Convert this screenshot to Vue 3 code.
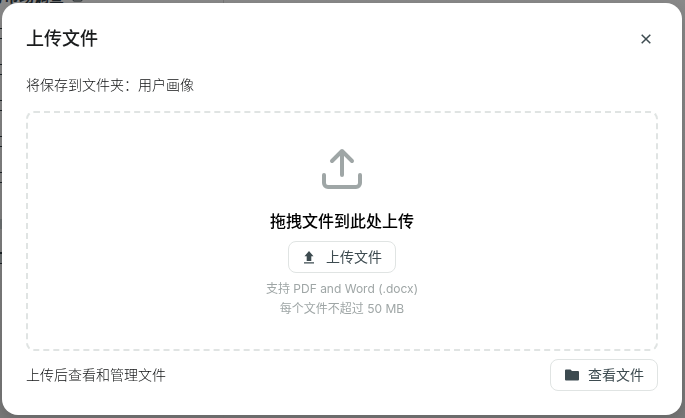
<template>
  <div class="page">
    <aside class="sidebar">
      <h2 class="sidebar-title">
        <span>写市场调查</span>
        <svg width="12" height="12" viewBox="0 0 12 12"><rect x="1" y="1" width="9" height="9" rx="1" fill="none" stroke="currentColor" /></svg>
      </h2>
      <ul class="folders">
        <li v-for="n in 5" :key="n"><span class="folder-box"></span></li>
      </ul>
      <div class="section-mark"></div>
      <div class="section-mark dark"></div>
    </aside>
  </div>

  <div class="overlay">
    <section class="modal" role="dialog" aria-modal="true" aria-labelledby="upload-title">
      <header class="modal-header">
        <h1 id="upload-title">上传文件</h1>
        <button class="close-btn" type="button" aria-label="关闭" @click="open = false">
          <svg width="12" height="12" viewBox="0 0 12 12"><path d="M1.700 1.700l8.600 8.600M10.300 1.700l-8.600 8.600" fill="none" stroke="currentColor" stroke-width="1.500" /></svg>
        </button>
      </header>

      <p class="save-to">将保存到文件夹：{{ folder }}</p>

      <div class="dropzone">
        <svg class="drop-icon" width="48" height="48" viewBox="0 0 48 48" fill="none" stroke="currentColor" stroke-width="4" stroke-linecap="round" stroke-linejoin="round">
          <path d="M24 30V6M14 16l10-10 10 10" />
          <path d="M6 30v8a4 4 0 0 0 4 4h28a4 4 0 0 0 4-4v-8" />
        </svg>
        <h3>拖拽文件到此处上传</h3>
        <button class="btn" type="button">
          <svg width="16" height="16" viewBox="0 0 16 16" fill="currentColor">
            <path d="M7 2l4.500 5.300H9.300V12H4.700V7.300H2.500zM2 13.300h10v1.200H2z" />
          </svg>
          上传文件
        </button>
        <div class="hints">
          <p>支持 PDF and Word (.docx)</p>
          <p>每个文件不超过 50 MB</p>
        </div>
      </div>

      <footer class="modal-footer">
        <span>上传后查看和管理文件</span>
        <button class="btn" type="button">
          <svg width="16" height="16" viewBox="0 0 16 16" fill="currentColor">
            <path d="M2 2.500h4.500L8 4h6a1 1 0 0 1 1 1v7.500a1 1 0 0 1-1 1H2a1 1 0 0 1-1-1v-9a1 1 0 0 1 1-1z" />
          </svg>
          查看文件
        </button>
      </footer>
    </section>
  </div>
</template>

<script setup>
import { ref } from 'vue'

const open = ref(true)
const folder = ref('用户画像')
</script>

<style>
body { background: #858585; overflow: hidden; }
</style>

<style scoped>
.page, .overlay { font-family: Inter, "Noto Sans CJK SC", sans-serif; }
h1, h2, h3, p, ul { margin: 0; padding: 0; }
.page { min-height: 100vh; display: flex; color: #1b2226; background: linear-gradient(#898989, #787878); }
.sidebar { width: 223px; border-right: 1px solid #777; overflow: hidden; }
.sidebar-title { display: flex; align-items: center; gap: 8px; height: 20px; margin: -13px 0 21px -11px; font-size: 15px; line-height: 20px; font-weight: 600; }
.folders { list-style: none; display: flex; flex-direction: column; gap: 25px; }
.folder-box { display: block; box-sizing: border-box; width: 2px; height: 11px; border: solid #1b2226; border-width: 1px 0; }
.folders li { height: 11px; }
.section-mark { width: 2px; height: 10px; margin: 36px 0 23px; background: #6b6f70; }
.section-mark.dark { box-sizing: border-box; height: 12px; margin-top: 0; border: solid #1b2226; border-width: 2px 0 1px; }

.overlay { position: fixed; inset: 0; box-sizing: border-box; padding: 3px 3px 3px 2px; }
.modal { box-sizing: border-box; padding: 24px; background: #fff; border-radius: 16px; box-shadow: 0 4px 12px rgba(0, 0, 0, 0.15); color: #0f1112; font-size: 14px; line-height: 20px; font-weight: 300; }
.modal-header { display: flex; justify-content: space-between; align-items: center; height: 24px; }
.modal-header h1 { font-size: 18px; line-height: 24px; font-weight: 500; color: #1a1c1d; }
.close-btn { display: flex; align-items: center; justify-content: center; width: 24px; height: 24px; padding: 0; border: none; background: none; color: #3d4b50; cursor: pointer; }
.save-to { margin: 24px 0 16px; }

.dropzone { display: flex; flex-direction: column; align-items: center; box-sizing: border-box; padding: 32px 24px 30px; border: 2px dashed #e0e4e3; border-radius: 8px; }
.drop-icon { color: #9fa6a6; }
.dropzone h3 { margin: 16px 0 8px; font-size: 16px; line-height: 24px; font-weight: 500; color: #000; }
.hints { margin-top: 6px; font-size: 12px; font-weight: 400; color: #9fa6a6; text-align: center; }

.btn { display: flex; align-items: center; gap: 8px; box-sizing: border-box; height: 32px; padding: 0 13px; border: 1px solid #e0e4e3; border-radius: 8px; background: #fff; color: #3d4b50; font-family: inherit; font-size: 14px; line-height: 20px; cursor: pointer; }
.modal-footer { display: flex; justify-content: space-between; align-items: center; margin-top: 8px; }
</style>
